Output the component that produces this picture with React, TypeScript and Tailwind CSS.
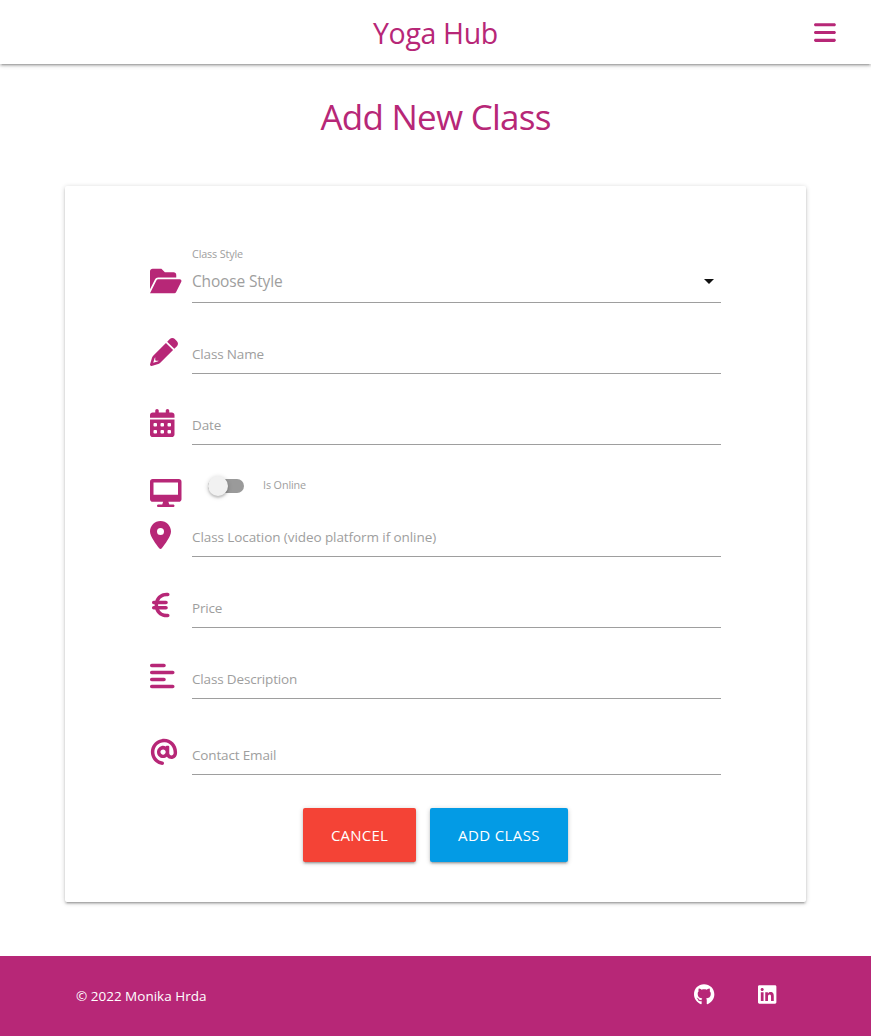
import type { ReactNode } from "react";
import {
  FaAlignLeft,
  FaBars,
  FaCalendarDays,
  FaEuroSign,
  FaGithub,
  FaLinkedin,
  FaLocationDot,
} from "react-icons/fa6";

function Glyph({ d, width }: { d: string; width: number }) {
  return (
    <svg viewBox={`0 0 ${width} 512`} height="1em" fill="currentColor" className="overflow-visible">
      <path d={d} />
    </svg>
  );
}

const folderPath =
  "M147.8 192H480V144C480 117.5 458.5 96 432 96h-160l-64-64h-160C21.49 32 0 53.49 0 80v328.4l90.54-181.1C101.4 205.6 123.4 192 147.8 192zM543.1 224H147.8C135.7 224 124.6 230.8 119.2 241.7L0 480h447.1c12.12 0 23.2-6.852 28.62-17.69l96-192C583.2 249 567.7 224 543.1 224z";
const pencilPath =
  "M421.7 220.3L188.5 453.4L154.6 419.5L158.1 416H112C103.2 416 96 408.8 96 400V353.9L92.51 357.4C87.78 362.2 84.31 368 82.42 374.4L59.44 452.6L137.6 429.6C143.1 427.7 149.8 424.2 154.6 419.5L188.5 453.4C178.1 463.8 165.2 471.5 151.1 475.6L30.77 511C22.35 513.5 13.24 511.2 7.03 504.1C.8198 498.8-1.502 489.7 .976 481.2L36.37 360.9C40.53 346.8 48.16 333.9 58.57 323.5L291.7 90.34L421.7 220.3zM492.7 58.75C517.7 83.74 517.7 124.3 492.7 149.3L444.3 197.7L314.3 67.72L362.7 19.32C387.7-5.678 428.3-5.678 453.3 19.32L492.7 58.75z";
const desktopPath =
  "M528 0h-480C21.5 0 0 21.5 0 48v320C0 394.5 21.5 416 48 416h192L224 464H152C138.8 464 128 474.8 128 488S138.8 512 152 512h272c13.25 0 24-10.75 24-24s-10.75-24-24-24H352L336 416h192c26.5 0 48-21.5 48-48v-320C576 21.5 554.5 0 528 0zM512 288H64V64h448V288z";
const atPath =
  "M207.8 20.73c-93.45 18.32-168.7 93.66-187 187.1c-27.64 140.9 68.65 266.2 199.1 285.1c19.01 2.888 36.17-12.26 36.17-31.49l.0001-.6631c0-15.74-11.44-28.88-26.84-31.24c-84.35-12.98-149.2-86.13-149.2-174.2c0-102.9 88.61-185.5 193.4-175.4c91.54 8.869 158.6 91.25 158.6 183.2l0 16.16c0 22.09-17.94 40.05-40 40.05s-40.01-17.96-40.01-40.05v-120.1c0-8.847-7.161-16.02-16.01-16.02l-31.98 .0036c-7.299 0-13.2 4.992-15.12 11.68c-24.85-12.15-54.24-16.38-86.06-5.106c-38.75 13.73-68.12 48.91-73.72 89.64c-9.483 69.01 43.81 128 110.9 128c26.44 0 50.43-9.544 69.59-24.88c24 31.3 65.23 48.69 109.4 37.49C465.2 369.3 496 324.1 495.1 277.2V256.3C495.1 107.1 361.2-9.332 207.8 20.73zM239.1 304.3c-26.47 0-48-21.56-48-48.05s21.53-48.05 48-48.05s48 21.56 48 48.05S266.5 304.3 239.1 304.3z";

type FieldProps = {
  icon: ReactNode;
  label: string;
  spacing?: string;
  tracking?: string;
  iconGap?: string;
};

function Field({
  icon,
  label,
  spacing = "h-[71px]",
  tracking = "tracking-[-0.16px]",
  iconGap = "mb-2",
}: FieldProps) {
  return (
    <div className={`flex items-end ${spacing}`}>
      <div className={`${iconGap} flex h-7 w-[42px] shrink-0 items-center text-[28px] text-[#b72777]`}>{icon}</div>
      <label className="flex h-[43px] grow items-center border-b border-[#9e9e9e] pt-1 text-[13.5px] text-[#9e9e9e]">
        <span className={tracking}>{label}</span>
      </label>
    </div>
  );
}

export default function App() {
  return (
    <div className="flex h-[1036px] flex-col bg-white font-['Open_Sans','Noto_Sans',sans-serif]">
      <nav className="grid h-16 shrink-0 grid-cols-[1fr_auto_1fr] items-center text-[#b72777] shadow-[0_2px_2px_0_rgba(0,0,0,0.14),0_3px_1px_-2px_rgba(0,0,0,0.12),0_1px_5px_0_rgba(0,0,0,0.2)]">
        <span />
        <span className="pt-[3px] text-[28.5px] leading-none tracking-[-0.35px]">Yoga Hub</span>
        <button className="mr-8 justify-self-end text-[25px]" aria-label="Menu">
          <FaBars preserveAspectRatio="xMinYMid meet" />
        </button>
      </nav>

      <h1 className="mt-[29px] h-12 text-center text-[35px] leading-[48px] tracking-[-0.75px] text-[#b72777]">
        Add New Class
      </h1>

      <main className="mx-[65px] mt-[45px] h-[716px] shrink-0 rounded-[2px] px-[85px] pt-[46px] shadow-[0_2px_2px_0_rgba(0,0,0,0.14),0_3px_1px_-2px_rgba(0,0,0,0.12),0_1px_5px_0_rgba(0,0,0,0.2)]">
        <div className="flex h-[71px] items-end">
          <div className="mb-2 flex h-7 w-[42px] shrink-0 items-center text-[28px] text-[#b72777]">
            <Glyph d={folderPath} width={576} />
          </div>
          <div className="grow border-b border-[#9e9e9e] text-[#9e9e9e]">
            <div className="text-[10.8px] leading-4 tracking-[-0.15px]">Class Style</div>
            <div className="flex h-10 items-center justify-between pr-[7px] text-[15.5px]">
              <span className="tracking-[-0.16px]">Choose Style</span>
              <svg className="mb-px h-[5px] w-[10px]" viewBox="0 0 10 5" fill="#111">
                <path d="M0 0h10L5 5z" />
              </svg>
            </div>
          </div>
        </div>
        <Field icon={<Glyph d={pencilPath} width={512} />} label="Class Name" />
        <Field icon={<FaCalendarDays preserveAspectRatio="xMinYMid meet" />} label="Date" />
        <div className="flex h-[41px] items-start">
          <div className="mt-[34px] flex h-7 w-[58px] shrink-0 items-center text-[28px] text-[#b72777]">
            <Glyph d={desktopPath} width={576} />
          </div>
          <div className="mt-[34px] flex h-[14px] w-9 items-center rounded-full bg-[#9a9a9a]">
            <div className="h-5 w-5 rounded-full bg-[#f1f1f1] shadow-[0_2px_2px_0_rgba(0,0,0,0.14),0_1px_5px_0_rgba(0,0,0,0.2)]" />
          </div>
          <span className="ml-[19px] mt-8 text-[10.8px] leading-4 tracking-[-0.12px] text-[#9e9e9e]">Is Online</span>
        </div>
        <Field
          icon={<FaLocationDot preserveAspectRatio="xMinYMid meet" />}
          label="Class Location (video platform if online)"
          tracking="tracking-[-0.08px]"
        />
        <Field
          icon={<FaEuroSign className="ml-[2px]" preserveAspectRatio="xMinYMid meet" />}
          label="Price"
          iconGap="mb-[9px]"
        />
        <Field
          icon={<FaAlignLeft preserveAspectRatio="xMinYMid meet" />}
          label="Class Description"
          iconGap="mb-[9px]"
        />
        <Field
          icon={<Glyph d={atPath} width={512} />}
          label="Contact Email"
          spacing="h-[76px]"
          iconGap="mb-[9px]"
        />

        <div className="mt-[33px] flex justify-center gap-[14px] text-[15px] text-white">
          <button className="h-[54px] w-[113px] rounded-[2px] bg-[#f44336] tracking-[0.2px] shadow-[0_2px_2px_0_rgba(0,0,0,0.14),0_3px_1px_-2px_rgba(0,0,0,0.12),0_1px_5px_0_rgba(0,0,0,0.2)]">
            CANCEL
          </button>
          <button className="h-[54px] w-[138px] rounded-[2px] bg-[#039be5] tracking-[0.4px] shadow-[0_2px_2px_0_rgba(0,0,0,0.14),0_3px_1px_-2px_rgba(0,0,0,0.12),0_1px_5px_0_rgba(0,0,0,0.2)]">
            ADD CLASS
          </button>
        </div>
      </main>

      <footer className="mt-auto flex h-20 shrink-0 items-center justify-between bg-[#b72777] pl-[76px] pr-[92px] text-white">
        <span className="text-[13.5px]">© 2022 Monika Hrda</span>
        <div className="mb-[3px] flex items-center gap-[43px] text-[21px]">
          <FaGithub preserveAspectRatio="xMinYMid meet" />
          <FaLinkedin preserveAspectRatio="xMinYMid meet" />
        </div>
      </footer>
    </div>
  );
}
